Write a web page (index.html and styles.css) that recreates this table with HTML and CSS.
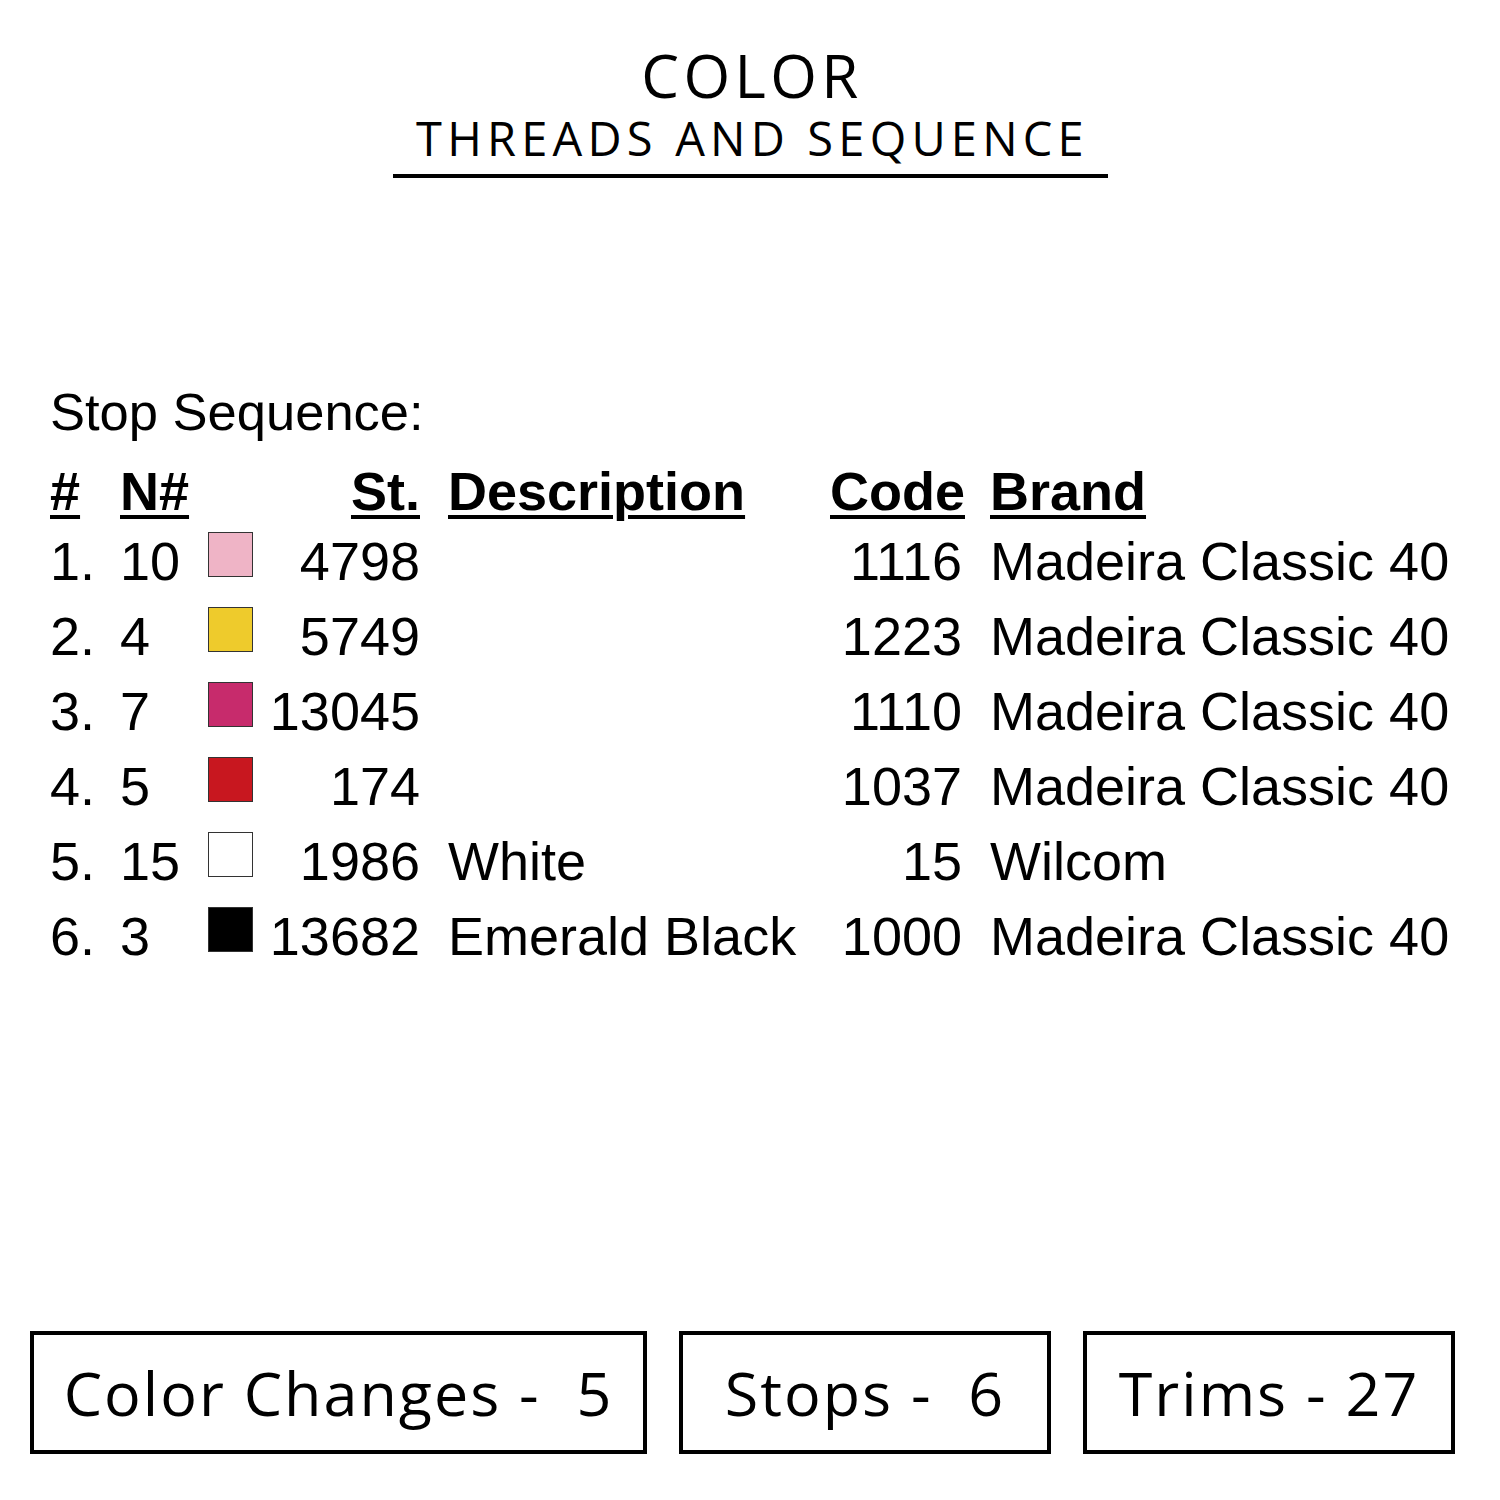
FILE: index.html
```html
<!DOCTYPE html>
<html lang="en">
<head>
<meta charset="utf-8">
<title>Color Threads and Sequence</title>
<link rel="stylesheet" href="styles.css">
</head>
<body>
<div class="page">
  <header class="title-block">
    <h1 class="title">COLOR</h1>
    <h2 class="subtitle">THREADS AND SEQUENCE</h2>
  </header>

  <section class="sequence">
    <div class="seq-label">Stop Sequence:</div>
    <div class="grid">
      <div class="hd c-num">#</div>
      <div class="hd c-n">N#</div>
      <div class="c-sw"></div>
      <div class="hd c-st">St.</div>
      <div class="hd c-desc">Description</div>
      <div class="hd c-code">Code</div>
      <div class="hd c-brand">Brand</div>

      <div class="c-num">1.</div><div class="c-n">10</div><div class="c-sw"><span class="sw" style="background:#efb4c6"></span></div><div class="c-st">4798</div><div class="c-desc"></div><div class="c-code">1116</div><div class="c-brand">Madeira Classic 40</div>
      <div class="c-num">2.</div><div class="c-n">4</div><div class="c-sw"><span class="sw" style="background:#eecb2c"></span></div><div class="c-st">5749</div><div class="c-desc"></div><div class="c-code">1223</div><div class="c-brand">Madeira Classic 40</div>
      <div class="c-num">3.</div><div class="c-n">7</div><div class="c-sw"><span class="sw" style="background:#c72b6c"></span></div><div class="c-st">13045</div><div class="c-desc"></div><div class="c-code">1110</div><div class="c-brand">Madeira Classic 40</div>
      <div class="c-num">4.</div><div class="c-n">5</div><div class="c-sw"><span class="sw" style="background:#c8171f"></span></div><div class="c-st">174</div><div class="c-desc"></div><div class="c-code">1037</div><div class="c-brand">Madeira Classic 40</div>
      <div class="c-num">5.</div><div class="c-n">15</div><div class="c-sw"><span class="sw" style="background:#ffffff"></span></div><div class="c-st">1986</div><div class="c-desc">White</div><div class="c-code">15</div><div class="c-brand">Wilcom</div>
      <div class="c-num">6.</div><div class="c-n">3</div><div class="c-sw"><span class="sw" style="background:#000000"></span></div><div class="c-st">13682</div><div class="c-desc">Emerald Black</div><div class="c-code">1000</div><div class="c-brand">Madeira Classic 40</div>
    </div>
  </section>

  <footer class="stats">
    <div class="stat stat-wide">Color Changes -&nbsp; 5</div>
    <div class="stat">Stops -&nbsp; 6</div>
    <div class="stat">Trims - 27</div>
  </footer>
</div>
</body>
</html>
```

FILE: styles.css
```css
* { box-sizing: border-box; }

html, body {
  margin: 0;
  padding: 0;
  background: #ffffff;
  color: #000000;
}

.page {
  width: 1500px;
  height: 1500px;
  display: flex;
  flex-direction: column;
}

.title-block {
  display: flex;
  flex-direction: column;
  align-items: center;
  padding-top: 40px;
  font-family: "Open Sans", "Noto Sans", sans-serif;
}

.title {
  margin: 0;
  padding-left: 4px;
  font-size: 60px;
  font-weight: 500;
  line-height: 70px;
  letter-spacing: 4.4px;
}

.subtitle {
  margin: 0;
  width: 715px;
  padding-left: 5px;
  text-align: center;
  font-size: 47px;
  font-weight: 400;
  line-height: 56px;
  letter-spacing: 5.2px;
  padding-bottom: 8px;
  border-bottom: 4px solid #000;
  white-space: nowrap;
}

.sequence {
  margin-top: 196px;
  padding-left: 50px;
  font-family: "Liberation Sans", Arial, sans-serif;
  font-size: 54px;
}

.seq-label {
  font-size: 52.5px;
  line-height: 75px;
  height: 80px;
}

.grid {
  display: grid;
  grid-template-columns: 70px 88px 45px 167px 410px 132px auto;
  grid-template-rows: 70px repeat(6, 75px);
  line-height: 75px;
  align-items: start;
}

.grid > div { white-space: nowrap; }

.hd {
  font-weight: 700;
  text-decoration: underline;
  text-decoration-thickness: 4px;
  text-underline-offset: 5px;
}

.c-st, .c-code { text-align: right; }
.c-desc { padding-left: 28px; }
.c-brand { padding-left: 28px; }

.c-sw { height: 75px; }

.sw {
  display: block;
  width: 45px;
  height: 45px;
  margin-top: 8px;
  border: 1.5px solid #333;
}

.stats {
  margin-top: auto;
  margin-bottom: 46px;
  padding-left: 30px;
  display: flex;
  gap: 32px;
  font-family: "Open Sans", "Noto Sans", sans-serif;
  font-size: 61px;
  letter-spacing: 2px;
}

.stat {
  width: 372px;
  height: 123px;
  border: 4px solid #000;
  display: flex;
  align-items: center;
  justify-content: center;
  white-space: pre;
}

.stat-wide { width: 617px; }
```
